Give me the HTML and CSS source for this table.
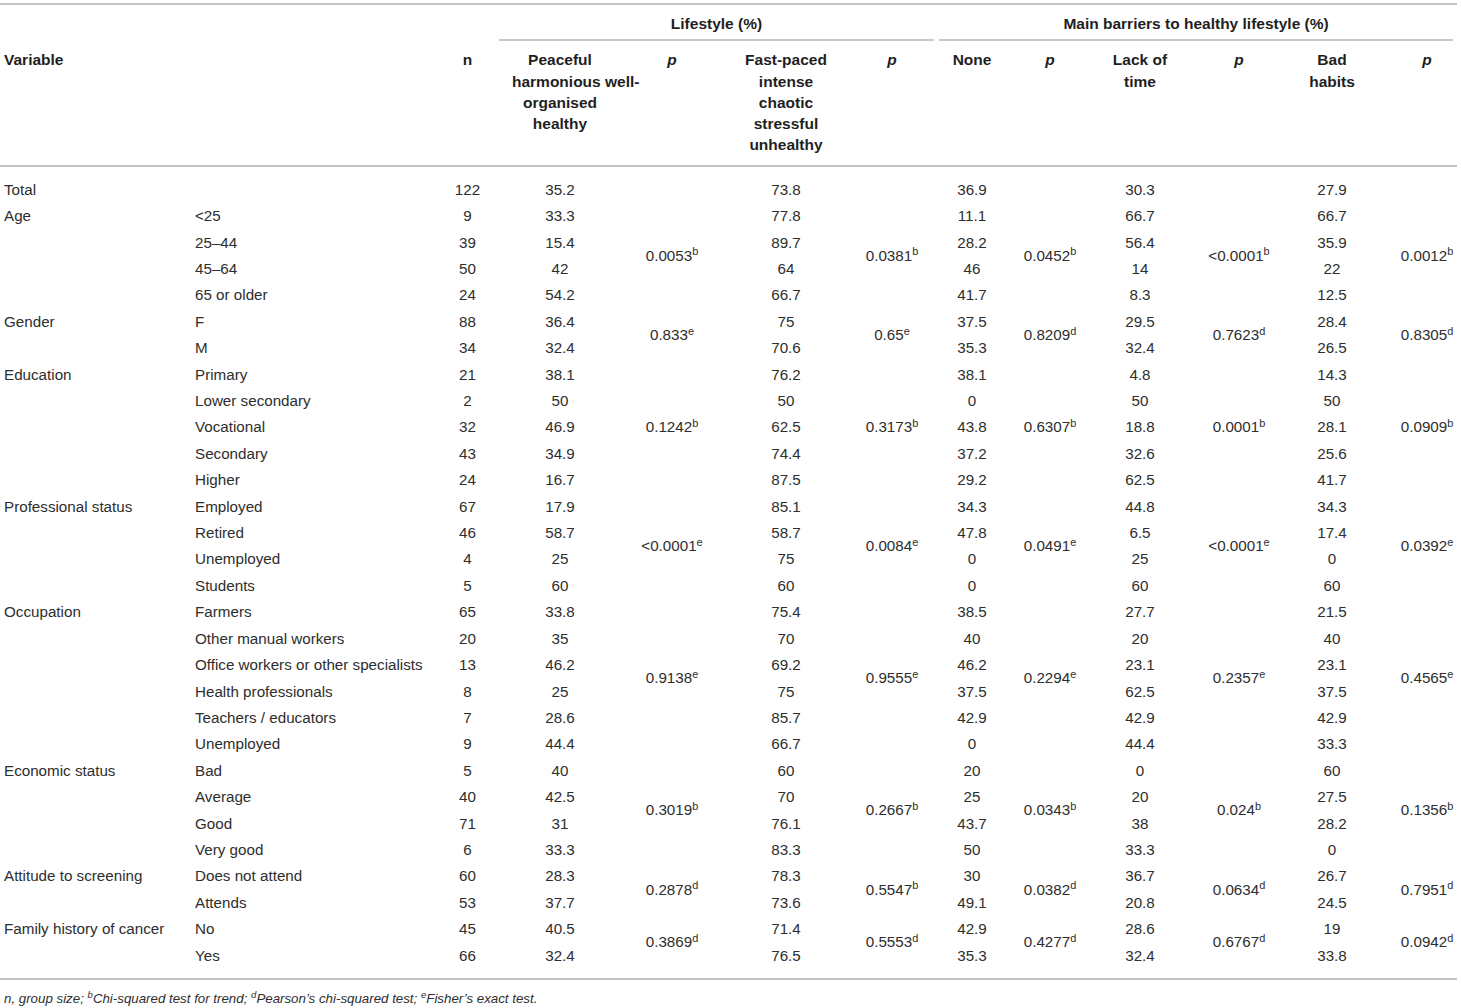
FILE: index.html
```html
<!DOCTYPE html>
<html lang="en">
<head>
<meta charset="utf-8">
<title>Lifestyle table</title>
<link rel="stylesheet" href="styles.css">
</head>
<body>
<div class="table-wrap">
<table class="data">
<colgroup>
<col style="width:190px"><col style="width:250px"><col style="width:55px"><col style="width:130px"><col style="width:94px"><col style="width:134px"><col style="width:84px"><col style="width:70px"><col style="width:86px"><col style="width:94px"><col style="width:104px"><col style="width:82px"><col style="width:84px">
</colgroup>
<thead>
<tr class="group-row">
<th colspan="3"></th>
<th colspan="4"><div class="group group-life">Lifestyle (%)</div></th>
<th colspan="6"><div class="group group-bar">Main barriers to healthy lifestyle (%)</div></th>
</tr>
<tr class="col-row">
<th class="c-var">Variable</th>
<th class="c-sub"></th>
<th>n</th>
<th><div class="narrow">Peaceful<br>harmonious well-<br>organised<br>healthy</div></th>
<th><i>p</i></th>
<th>Fast-paced<br>intense<br>chaotic<br>stressful<br>unhealthy</th>
<th class="c-p2"><i>p</i></th>
<th>None</th>
<th><i>p</i></th>
<th>Lack of<br>time</th>
<th><i>p</i></th>
<th>Bad<br>habits</th>
<th class="c-p5"><i>p</i></th>
</tr>
</thead>
<tbody>
<tr class="spacer-top"><td colspan="13"></td></tr>
<tr><td class="c-var">Total</td><td class="c-sub"></td><td>122</td><td>35.2</td><td></td><td>73.8</td><td class="c-p2"></td><td>36.9</td><td></td><td>30.3</td><td></td><td>27.9</td><td class="c-p5"></td></tr>

<tr><td class="c-var">Age</td><td class="c-sub">&lt;25</td><td>9</td><td>33.3</td><td rowspan="4">0.0053<sup>b</sup></td><td>77.8</td><td class="c-p2" rowspan="4">0.0381<sup>b</sup></td><td>11.1</td><td rowspan="4">0.0452<sup>b</sup></td><td>66.7</td><td rowspan="4">&lt;0.0001<sup>b</sup></td><td>66.7</td><td class="c-p5" rowspan="4">0.0012<sup>b</sup></td></tr>
<tr><td class="c-var"></td><td class="c-sub">25–44</td><td>39</td><td>15.4</td><td>89.7</td><td>28.2</td><td>56.4</td><td>35.9</td></tr>
<tr><td class="c-var"></td><td class="c-sub">45–64</td><td>50</td><td>42</td><td>64</td><td>46</td><td>14</td><td>22</td></tr>
<tr><td class="c-var"></td><td class="c-sub">65 or older</td><td>24</td><td>54.2</td><td>66.7</td><td>41.7</td><td>8.3</td><td>12.5</td></tr>

<tr><td class="c-var">Gender</td><td class="c-sub">F</td><td>88</td><td>36.4</td><td rowspan="2">0.833<sup>e</sup></td><td>75</td><td class="c-p2" rowspan="2">0.65<sup>e</sup></td><td>37.5</td><td rowspan="2">0.8209<sup>d</sup></td><td>29.5</td><td rowspan="2">0.7623<sup>d</sup></td><td>28.4</td><td class="c-p5" rowspan="2">0.8305<sup>d</sup></td></tr>
<tr><td class="c-var"></td><td class="c-sub">M</td><td>34</td><td>32.4</td><td>70.6</td><td>35.3</td><td>32.4</td><td>26.5</td></tr>

<tr><td class="c-var">Education</td><td class="c-sub">Primary</td><td>21</td><td>38.1</td><td rowspan="5">0.1242<sup>b</sup></td><td>76.2</td><td class="c-p2" rowspan="5">0.3173<sup>b</sup></td><td>38.1</td><td rowspan="5">0.6307<sup>b</sup></td><td>4.8</td><td rowspan="5">0.0001<sup>b</sup></td><td>14.3</td><td class="c-p5" rowspan="5">0.0909<sup>b</sup></td></tr>
<tr><td class="c-var"></td><td class="c-sub">Lower secondary</td><td>2</td><td>50</td><td>50</td><td>0</td><td>50</td><td>50</td></tr>
<tr><td class="c-var"></td><td class="c-sub">Vocational</td><td>32</td><td>46.9</td><td>62.5</td><td>43.8</td><td>18.8</td><td>28.1</td></tr>
<tr><td class="c-var"></td><td class="c-sub">Secondary</td><td>43</td><td>34.9</td><td>74.4</td><td>37.2</td><td>32.6</td><td>25.6</td></tr>
<tr><td class="c-var"></td><td class="c-sub">Higher</td><td>24</td><td>16.7</td><td>87.5</td><td>29.2</td><td>62.5</td><td>41.7</td></tr>

<tr><td class="c-var">Professional status</td><td class="c-sub">Employed</td><td>67</td><td>17.9</td><td rowspan="4">&lt;0.0001<sup>e</sup></td><td>85.1</td><td class="c-p2" rowspan="4">0.0084<sup>e</sup></td><td>34.3</td><td rowspan="4">0.0491<sup>e</sup></td><td>44.8</td><td rowspan="4">&lt;0.0001<sup>e</sup></td><td>34.3</td><td class="c-p5" rowspan="4">0.0392<sup>e</sup></td></tr>
<tr><td class="c-var"></td><td class="c-sub">Retired</td><td>46</td><td>58.7</td><td>58.7</td><td>47.8</td><td>6.5</td><td>17.4</td></tr>
<tr><td class="c-var"></td><td class="c-sub">Unemployed</td><td>4</td><td>25</td><td>75</td><td>0</td><td>25</td><td>0</td></tr>
<tr><td class="c-var"></td><td class="c-sub">Students</td><td>5</td><td>60</td><td>60</td><td>0</td><td>60</td><td>60</td></tr>

<tr><td class="c-var">Occupation</td><td class="c-sub">Farmers</td><td>65</td><td>33.8</td><td rowspan="6">0.9138<sup>e</sup></td><td>75.4</td><td class="c-p2" rowspan="6">0.9555<sup>e</sup></td><td>38.5</td><td rowspan="6">0.2294<sup>e</sup></td><td>27.7</td><td rowspan="6">0.2357<sup>e</sup></td><td>21.5</td><td class="c-p5" rowspan="6">0.4565<sup>e</sup></td></tr>
<tr><td class="c-var"></td><td class="c-sub">Other manual workers</td><td>20</td><td>35</td><td>70</td><td>40</td><td>20</td><td>40</td></tr>
<tr><td class="c-var"></td><td class="c-sub">Office workers or other specialists</td><td>13</td><td>46.2</td><td>69.2</td><td>46.2</td><td>23.1</td><td>23.1</td></tr>
<tr><td class="c-var"></td><td class="c-sub">Health professionals</td><td>8</td><td>25</td><td>75</td><td>37.5</td><td>62.5</td><td>37.5</td></tr>
<tr><td class="c-var"></td><td class="c-sub">Teachers / educators</td><td>7</td><td>28.6</td><td>85.7</td><td>42.9</td><td>42.9</td><td>42.9</td></tr>
<tr><td class="c-var"></td><td class="c-sub">Unemployed</td><td>9</td><td>44.4</td><td>66.7</td><td>0</td><td>44.4</td><td>33.3</td></tr>

<tr><td class="c-var">Economic status</td><td class="c-sub">Bad</td><td>5</td><td>40</td><td rowspan="4">0.3019<sup>b</sup></td><td>60</td><td class="c-p2" rowspan="4">0.2667<sup>b</sup></td><td>20</td><td rowspan="4">0.0343<sup>b</sup></td><td>0</td><td rowspan="4">0.024<sup>b</sup></td><td>60</td><td class="c-p5" rowspan="4">0.1356<sup>b</sup></td></tr>
<tr><td class="c-var"></td><td class="c-sub">Average</td><td>40</td><td>42.5</td><td>70</td><td>25</td><td>20</td><td>27.5</td></tr>
<tr><td class="c-var"></td><td class="c-sub">Good</td><td>71</td><td>31</td><td>76.1</td><td>43.7</td><td>38</td><td>28.2</td></tr>
<tr><td class="c-var"></td><td class="c-sub">Very good</td><td>6</td><td>33.3</td><td>83.3</td><td>50</td><td>33.3</td><td>0</td></tr>

<tr><td class="c-var">Attitude to screening</td><td class="c-sub">Does not attend</td><td>60</td><td>28.3</td><td rowspan="2">0.2878<sup>d</sup></td><td>78.3</td><td class="c-p2" rowspan="2">0.5547<sup>b</sup></td><td>30</td><td rowspan="2">0.0382<sup>d</sup></td><td>36.7</td><td rowspan="2">0.0634<sup>d</sup></td><td>26.7</td><td class="c-p5" rowspan="2">0.7951<sup>d</sup></td></tr>
<tr><td class="c-var"></td><td class="c-sub">Attends</td><td>53</td><td>37.7</td><td>73.6</td><td>49.1</td><td>20.8</td><td>24.5</td></tr>

<tr><td class="c-var">Family history of cancer</td><td class="c-sub">No</td><td>45</td><td>40.5</td><td rowspan="2">0.3869<sup>d</sup></td><td>71.4</td><td class="c-p2" rowspan="2">0.5553<sup>d</sup></td><td>42.9</td><td rowspan="2">0.4277<sup>d</sup></td><td>28.6</td><td rowspan="2">0.6767<sup>d</sup></td><td>19</td><td class="c-p5" rowspan="2">0.0942<sup>d</sup></td></tr>
<tr><td class="c-var"></td><td class="c-sub">Yes</td><td>66</td><td>32.4</td><td>76.5</td><td>35.3</td><td>32.4</td><td>33.8</td></tr>
<tr class="spacer-bottom"><td colspan="13"></td></tr>
</tbody>
</table>
</div>
<p class="footnote"><i>n</i>, group size; <sup>b</sup>Chi-squared test for trend; <sup>d</sup>Pearson’s chi-squared test; <sup>e</sup>Fisher’s exact test.</p>
</body>
</html>
```

FILE: styles.css
```css
html, body {
  margin: 0;
  padding: 0;
  background: #ffffff;
}

body {
  font-family: "Liberation Sans", Arial, Helvetica, sans-serif;
  color: #2e2e2e;
  width: 1461px;
}

.table-wrap {
  width: 1457px;
  margin-top: 3px;
  border-top: 2px solid #c2c2c2;
  border-bottom: 2px solid #c2c2c2;
}

.data {
  width: 1457px;
  border-collapse: collapse;
  table-layout: fixed;
  font-size: 15.2px;
}

.data th {
  font-weight: bold;
  font-size: 15.5px;
  color: #1f1f1f;
  text-align: center;
  vertical-align: top;
  padding: 0;
  line-height: 21.3px;
  white-space: nowrap;
}

.group-row th {
  padding: 0;
}

.group {
  padding: 8px 0 5px;
  border-bottom: 2px solid #c8c8c8;
}

.group-life {
  margin: 0 3px 0 4px;
}

.group-bar {
  margin: 0 4px 0 2px;
}

.col-row th {
  padding-top: 8px;
  padding-bottom: 9px;
  border-bottom: 2px solid #c2c2c2;
}

.narrow {
  width: 96px;
  margin: 0 auto;
  text-align: center;
}

.data td {
  padding: 0;
  text-align: center;
  vertical-align: middle;
  line-height: 26.4px;
  white-space: nowrap;
}

.data .c-var {
  text-align: left;
  padding-left: 4px;
  vertical-align: top;
}

.data .c-sub {
  text-align: left;
  padding-left: 5px;
}

.data .c-p2 {
  padding-right: 6px;
}

.data .c-p5 {
  padding-left: 24px;
}

.spacer-top td {
  height: 10px;
  line-height: 0;
}

.spacer-bottom td {
  height: 9px;
  line-height: 0;
}

sup {
  font-size: 0.72em;
  line-height: 0;
  vertical-align: baseline;
  position: relative;
  top: -0.5em;
}

.footnote {
  margin: 11px 0 0 4px;
  font-size: 13.3px;
  font-style: italic;
  color: #2e2e2e;
  line-height: 16px;
}
```
